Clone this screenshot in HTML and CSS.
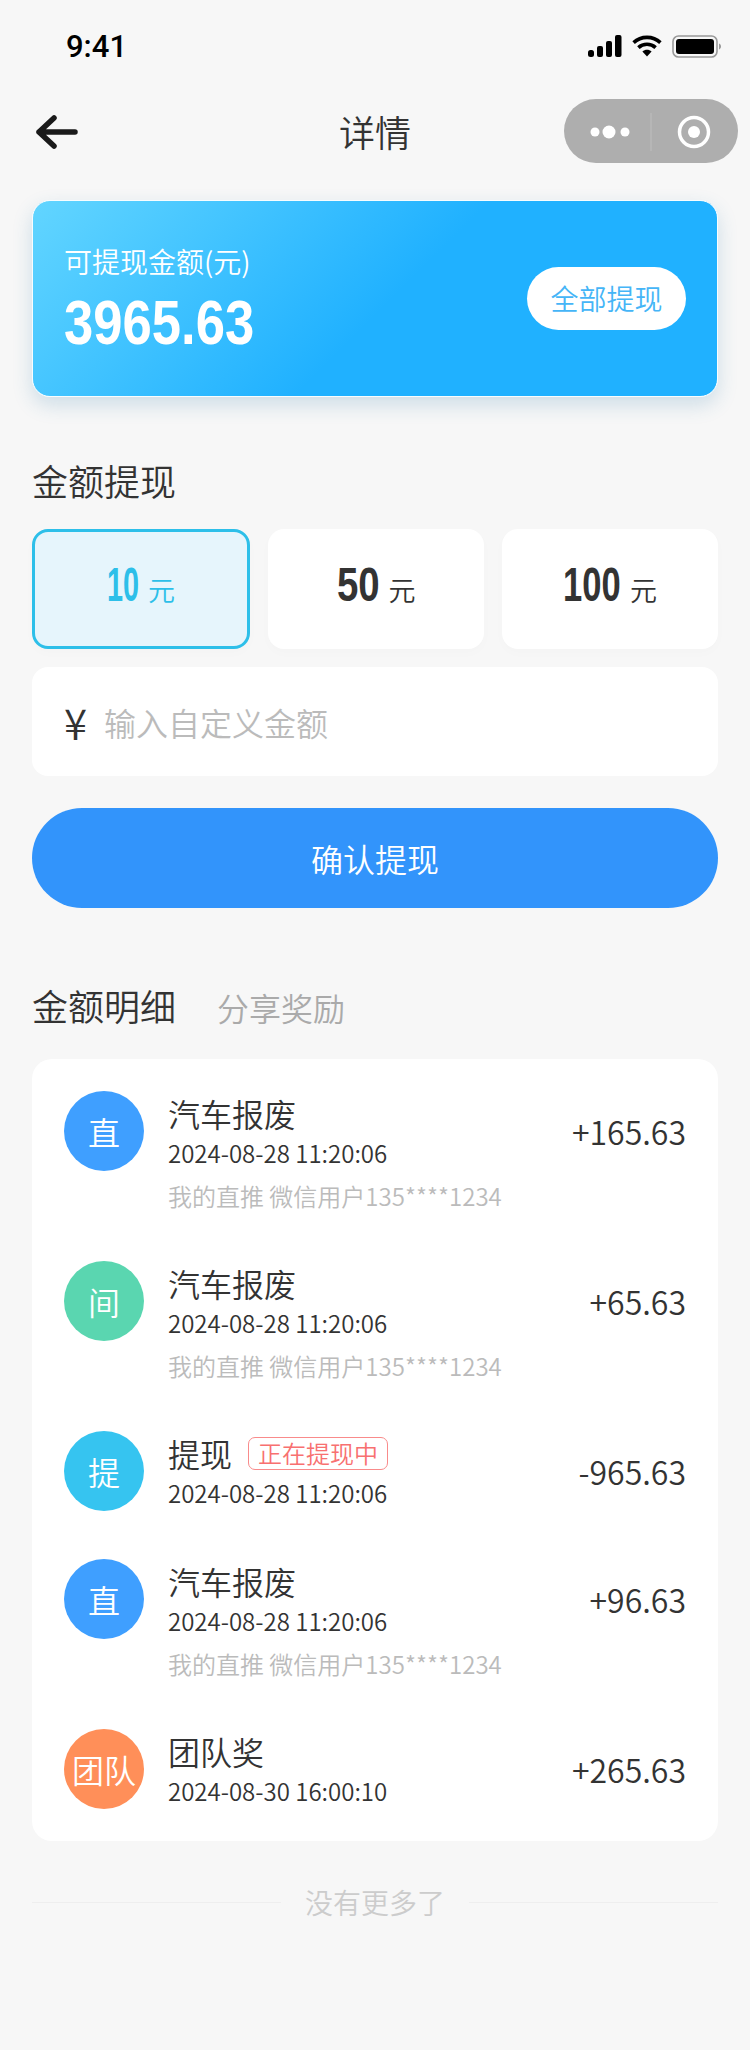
FILE: index.html
```html
<!DOCTYPE html>
<html lang="zh-CN">
<head>
  <meta charset="UTF-8" />
  <meta name="viewport" content="width=device-width, initial-scale=1.0" />
  <title>详情</title>
  <link rel="stylesheet" href="styles.css">
</head>
<body>
  <div class="status">
    <span class="time">9:41</span>
    <div class="status-icons">
      <svg width="34" height="22" viewBox="0 0 34 22" fill="#000">
        <rect x="0" y="15" width="6" height="7" rx="2.5"/>
        <rect x="9" y="11" width="6" height="11" rx="2"/>
        <rect x="18" y="6" width="6" height="16" rx="2"/>
        <rect x="27" y="0" width="6.5" height="22" rx="2"/>
      </svg>
      <svg width="30" height="22" viewBox="0 0 30 22">
        <g fill="none" stroke="#000" stroke-width="3.6">
          <path d="M1.6 7.6C9 .6 21 .6 28.4 7.6"/>
          <path d="M6.4 12.6C11.2 8.2 18.8 8.2 23.6 12.6"/>
        </g>
        <path d="M10.4 16.6C13 14.2 17 14.2 19.6 16.6L15 21.6Z" fill="#000"/>
      </svg>
      <svg width="49" height="23" viewBox="0 0 49 23">
        <rect x="1" y="1" width="44" height="21" rx="5.5" fill="none" stroke="#999" stroke-width="1.6"/>
        <rect x="4" y="4" width="38" height="15" rx="3" fill="#000"/>
        <path d="M47 8.5c1.2.4 2 1.600 2 3s-.8 2.600-2 3z" fill="#999"/>
      </svg>
    </div>
  </div>

  <div class="nav">
    <svg class="back" width="42" height="34" viewBox="0 0 42 34" fill="none" stroke="#1a1a1a" stroke-width="5.5" stroke-linecap="round" stroke-linejoin="round">
      <path d="M18 3 3 17l15 14M3 17h36"/>
    </svg>
    <div class="nav-title">详情</div>
    <div class="capsule">
      <svg width="174" height="64" viewBox="0 0 174 64">
        <circle cx="31" cy="33" r="4.500" fill="#fff"/>
        <circle cx="45" cy="33" r="6.500" fill="#fff"/>
        <circle cx="61" cy="33" r="4.500" fill="#fff"/>
        <rect x="86.500" y="14" width="1" height="38" fill="#bdbdbd"/>
        <circle cx="130" cy="33" r="14.500" fill="none" stroke="#fff" stroke-width="3.500"/>
        <circle cx="130" cy="33" r="6" fill="#fff"/>
      </svg>
    </div>
  </div>

  <div class="page">
    <div class="balance">
      <div>
        <div class="balance-label">可提现金额(元)</div>
        <div class="balance-num">3965.63</div>
      </div>
      <div class="all-btn">全部提现</div>
    </div>

    <h2 class="heading">金额提现</h2>
    <div class="options">
      <div class="option active"><b class="n10">10</b><span>元</span></div>
      <div class="option"><b class="n50">50</b><span>元</span></div>
      <div class="option"><b class="n100">100</b><span>元</span></div>
    </div>
    <div class="amount-input">
      <span class="yen">¥</span>
      <span class="placeholder">输入自定义金额</span>
    </div>
    <div class="confirm">确认提现</div>

    <div class="tabs">
      <h2 class="heading">金额明细</h2>
      <span class="tab">分享奖励</span>
    </div>

    <div class="list">
      <div class="row">
        <div class="avatar blue">直</div>
        <div class="info">
          <div class="name">汽车报废</div>
          <div class="date">2024-08-28 11:20:06</div>
          <div class="desc">我的直推 微信用户135****1234</div>
        </div>
        <div class="money">+165.63</div>
      </div>
      <div class="row">
        <div class="avatar green">间</div>
        <div class="info">
          <div class="name">汽车报废</div>
          <div class="date">2024-08-28 11:20:06</div>
          <div class="desc">我的直推 微信用户135****1234</div>
        </div>
        <div class="money">+65.63</div>
      </div>
      <div class="row">
        <div class="avatar cyan">提</div>
        <div class="info">
          <div class="name">提现<span class="tag">正在提现中</span></div>
          <div class="date">2024-08-28 11:20:06</div>
        </div>
        <div class="money">-965.63</div>
      </div>
      <div class="row">
        <div class="avatar blue">直</div>
        <div class="info">
          <div class="name">汽车报废</div>
          <div class="date">2024-08-28 11:20:06</div>
          <div class="desc">我的直推 微信用户135****1234</div>
        </div>
        <div class="money">+96.63</div>
      </div>
      <div class="row">
        <div class="avatar orange">团队</div>
        <div class="info">
          <div class="name">团队奖</div>
          <div class="date">2024-08-30 16:00:10</div>
        </div>
        <div class="money">+265.63</div>
      </div>
    </div>

    <div class="end">没有更多了</div>
  </div>
</body>
</html>
```

FILE: styles.css
```css
* {
  box-sizing: border-box;
}

body {
  margin: 0;
  width: 750px;
  height: 2050px;
  overflow: hidden;
  background: #f7f7f7;
  color: #333;
  font-family: "Noto Sans CJK SC", "Noto Sans", sans-serif;
  font-weight: 350;
}

.status {
  height: 92px;
  padding: 0 29px 0 66px;
  display: flex;
  align-items: center;
  justify-content: space-between;
}

.time {
  font-family: "Roboto", "Liberation Sans", sans-serif;
  font-size: 31px;
  font-weight: 500;
  color: #000;
}

.status-icons {
  display: flex;
  align-items: center;
  gap: 10px;
}

.nav {
  height: 78px;
  padding: 0 12px;
  display: grid;
  grid-template-columns: minmax(0, 1fr) auto minmax(0, 1fr);
  align-items: center;
}

.back {
  margin: 2px 0 0 24px;
}

.nav-title {
  font-size: 36px;
}

.capsule {
  justify-self: end;
  width: 174px;
  height: 64px;
  border-radius: 32px;
  background: #aeaeae;
}

.capsule svg {
  display: block;
}

.page {
  padding: 0 32px;
}

.balance {
  margin-top: 30px;
  height: 197px;
  padding: 0 31px;
  display: flex;
  align-items: center;
  justify-content: space-between;
  border: 1px solid #f8fdff;
  border-radius: 18px;
  background: linear-gradient(135deg, #62d5ff 0%, #20b1ff 52%, #20b1ff 100%);
  box-shadow: 0 8px 20px rgba(40, 120, 170, 0.2);
  color: #fff;
}

.balance-label {
  font-size: 28px;
  line-height: 40px;
}

.balance-num {
  font-family: "Liberation Sans", sans-serif;
  font-size: 63px;
  font-weight: 700;
  line-height: 70px;
  margin-top: 6px;
  transform: scaleX(0.835);
  transform-origin: left;
}

.all-btn {
  width: 159px;
  height: 63px;
  border-radius: 32px;
  background: #fff;
  color: #45b5f7;
  font-size: 28px;
  line-height: 63px;
  text-align: center;
}

.heading {
  margin: 59px 0 0;
  font-size: 36px;
  font-weight: 350;
  line-height: 48px;
}

.options {
  margin-top: 25px;
  display: grid;
  grid-template-columns: 218px 216px 216px;
  gap: 18px;
}

.option {
  height: 120px;
  display: flex;
  align-items: baseline;
  justify-content: center;
  gap: 9px;
  padding-top: 24px;
  border-radius: 16px;
  background: #fff;
  box-shadow: 0 4px 12px rgba(0, 0, 0, 0.015);
}

.option b {
  font-family: "Liberation Sans", sans-serif;
  font-size: 48px;
  font-weight: 700;
  line-height: 64px;
  transform-origin: left;
}

/* the digits are narrower than any installed face, squeeze them per value */
.n10 {
  width: 32px;
  transform: scaleX(0.6);
}

.n50 {
  width: 43px;
  transform: scaleX(0.8);
}

.n100 {
  width: 58px;
  transform: scaleX(0.72);
}

.option span {
  font-size: 27px;
}

.option.active {
  border: 3px solid #2dbfe9;
  background: #e6f5fc;
  color: #2dbfe9;
  padding-top: 21px;
}

.amount-input {
  margin-top: 18px;
  height: 109px;
  padding-left: 32px;
  display: flex;
  align-items: center;
  gap: 17px;
  border-radius: 16px;
  background: #fff;
}

.yen {
  font-size: 42px;
  line-height: 48px;
}

.placeholder {
  font-size: 32px;
  color: #bbb;
}

.confirm {
  margin-top: 32px;
  height: 100px;
  border-radius: 50px;
  background: #3294fb;
  color: #fff;
  font-size: 32px;
  line-height: 100px;
  text-align: center;
}

.tabs {
  margin-top: 73px;
  display: flex;
  align-items: baseline;
  gap: 41px;
}

.tabs .heading {
  margin: 0;
}

.tab {
  font-size: 32px;
  color: #aaa;
}

.list {
  margin-top: 29px;
  padding: 32px;
  display: flex;
  flex-direction: column;
  gap: 48px;
  border-radius: 20px;
  background: #fff;
}

.row {
  display: flex;
  align-items: flex-start;
  min-height: 80px;
}

.avatar {
  width: 80px;
  height: 80px;
  flex: none;
  border-radius: 50%;
  color: #fff;
  font-size: 32px;
  line-height: 80px;
  text-align: center;
}

.blue { background: #3f9fff; }
.green { background: #5ad6b0; }
.cyan { background: #36c4f0; }
.orange { background: #ff8f59; }

.info {
  flex: 1;
  margin-left: 24px;
}

.name {
  display: flex;
  align-items: center;
  height: 44px;
  font-size: 32px;
}

.tag {
  margin-left: 16px;
  width: 140px;
  height: 33px;
  border: 1px solid #f98b8b;
  border-radius: 7px;
  color: #f87070;
  font-size: 24px;
  line-height: 30px;
  text-align: center;
}

.date {
  margin-top: 1px;
  font-size: 24px;
  line-height: 34px;
}

.desc {
  margin-top: 9px;
  font-size: 24px;
  line-height: 34px;
  color: #bbb;
}

.money {
  font-size: 32px;
  line-height: 80px;
}

.end {
  margin-top: 41px;
  display: flex;
  align-items: center;
  gap: 24px;
  color: #ccc;
  font-size: 28px;
  line-height: 40px;
}

.end::before,
.end::after {
  content: "";
  flex: 1;
  height: 1px;
  background: #eee;
}
```
